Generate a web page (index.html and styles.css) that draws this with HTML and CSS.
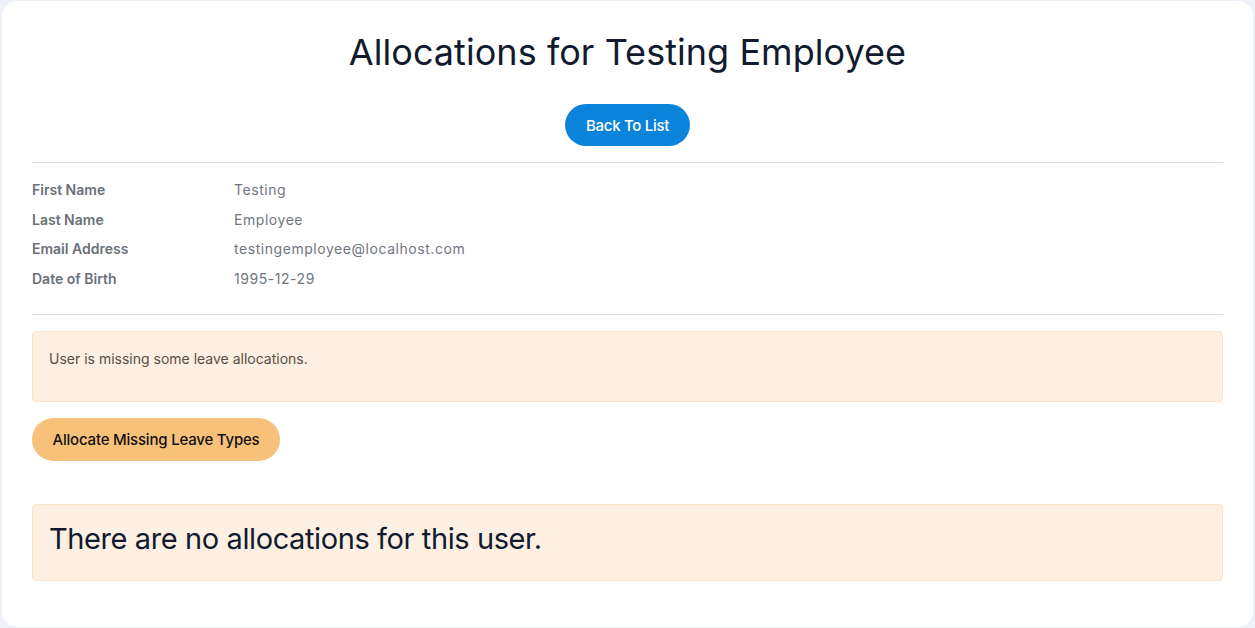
FILE: index.html
```html
<!DOCTYPE html>
<html lang="en">
<head>
<meta charset="utf-8">
<title>Allocations for Testing Employee</title>
<link rel="stylesheet" href="styles.css">
</head>
<body>
<main class="card">
  <h1 class="title">Allocations for Testing Employee</h1>
  <div class="center">
    <a class="btn btn-blue" href="#">Back To List</a>
  </div>
  <hr class="rule">
  <dl class="details">
    <dt>First Name</dt><dd>Testing</dd>
    <dt>Last Name</dt><dd>Employee</dd>
    <dt>Email Address</dt><dd>testingemployee@localhost.com</dd>
    <dt>Date of Birth</dt><dd>1995-12-29</dd>
  </dl>
  <hr class="rule">
  <div class="alert">
    <p class="alert-text">User is missing some leave allocations.</p>
  </div>
  <a class="btn btn-orange" href="#">Allocate Missing Leave Types</a>
  <div class="alert alert-big">
    <h3 class="big-text">There are no allocations for this user.</h3>
  </div>
</main>
</body>
</html>
```

FILE: styles.css
```css
* { box-sizing: border-box; }
html, body { margin: 0; }
body {
  background: #eef2f8;
  font-family: Inter, "Noto Sans", sans-serif;
  color: #1e293b;
}
.card {
  background: #ffffff;
  margin: 1px 2px 2px 2px;
  border-radius: 15px;
  padding: 30px 30px 30px 30px;
}
.title {
  margin: 0 0 30px 0;
  text-align: center;
  font-size: 36px;
  line-height: 43px;
  font-weight: 400;
  color: #111a2e;
  letter-spacing: 0.05px;
}
.center { display: flex; justify-content: center; }
.btn {
  display: inline-flex;
  align-items: center;
  justify-content: center;
  text-decoration: none;
  border-radius: 22px;
  font-size: 15px;
  font-weight: 500;
  letter-spacing: -0.3px;
}
.btn-blue {
  background: #0a84db;
  color: #ffffff;
  height: 42px;
  width: 125px;
}
.rule {
  border: 0;
  border-top: 1px solid #dcdcdc;
  margin: 16px 0;
}
.details {
  display: grid;
  grid-template-columns: 202px 1fr;
  row-gap: 8px;
  margin: 16px 0 24px 0;
  font-size: 14px;
  line-height: 21.7px;
}
.details dt {
  font-weight: 600;
  color: #6b7079;
  letter-spacing: 0;
}
.details dd {
  margin: 0;
  color: #71767e;
  letter-spacing: 0.55px;
}
.alert {
  background: #fdf0e2;
  border: 1px solid #fbe3c4;
  border-radius: 4px;
  padding: 16px 16px;
  margin-bottom: 16px;
}
.alert-text {
  margin: 0 0 16px 0;
  font-size: 14px;
  line-height: 21px;
  color: #5b4d44;
  letter-spacing: 0;
}
.btn-orange {
  background: #f7c17a;
  color: #111111;
  height: 43px;
  width: 248px;
  margin-bottom: 43px;
  letter-spacing: -0.2px;
}
.alert-big { padding: 16px 16px 15px 16px; }
.big-text {
  margin: 0 0 8px 0;
  font-size: 29px;
  line-height: 36px;
  font-weight: 400;
  color: #111a2e;
  letter-spacing: -0.4px;
}
```
